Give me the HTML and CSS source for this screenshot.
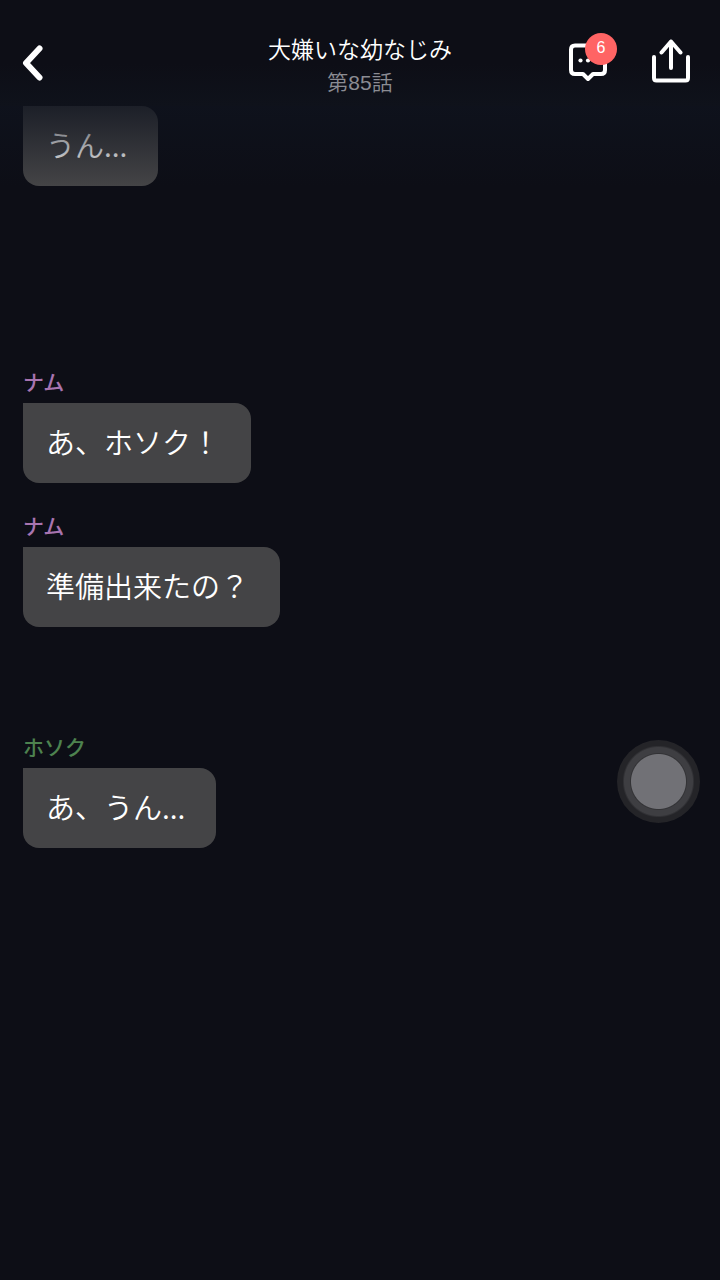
FILE: index.html
```html
<!DOCTYPE html>
<html lang="ja">
<head>
<meta charset="utf-8">
<meta name="viewport" content="width=device-width, initial-scale=1">
<title>大嫌いな幼なじみ 第85話</title>
<link rel="stylesheet" href="styles.css">
</head>
<body>
<header class="header">
  <div class="side">
    <button class="icon-button" type="button" aria-label="戻る">
      <svg width="22" height="36" viewBox="0 0 22 36"><path class="back-line" d="M17.500 3.500 4 18 17.500 32.500"/></svg>
    </button>
  </div>
  <div class="heading">
    <h1 class="title">大嫌いな幼なじみ</h1>
    <p class="episode">第85話</p>
  </div>
  <div class="side side-end">
    <button class="icon-button" type="button" aria-label="コメント">
      <svg width="40" height="44" viewBox="0 0 40 44"><path class="line" d="M7 6.500H33Q37 6.500 37 10.500V31Q37 35 33 35H25L20 40 15 35H7Q3 35 3 31V10.500Q3 6.500 7 6.500Z"/><g fill="#fff"><circle cx="12.500" cy="21.500" r="2.100"/><circle cx="20" cy="21.500" r="2.100"/></g></svg>
      <span class="badge">6</span>
    </button>
    <button class="icon-button" type="button" aria-label="共有">
      <svg width="40" height="44" viewBox="0 0 40 44"><path class="line" d="M3 18V39Q3 41.500 5.500 41.500H34.500Q37 41.500 37 39V18M20 29V2.500M10.500 13.500 20 2.500 29.500 13.500"/></svg>
    </button>
  </div>
</header>
<main class="chat">
  <article class="message"><p class="bubble">うん...</p></article>
  <article class="message after-long-pause">
    <h2 class="name name-namu">ナム</h2>
    <p class="bubble">あ、ホソク！</p>
  </article>
  <article class="message">
    <h2 class="name name-namu">ナム</h2>
    <p class="bubble">準備出来たの？</p>
  </article>
  <article class="message after-pause">
    <h2 class="name name-hosok">ホソク</h2>
    <p class="bubble">あ、うん...</p>
  </article>
</main>
<button class="touch" type="button" aria-label="AssistiveTouch"></button>
</body>
</html>
```
FILE: styles.css
```css
* {
  box-sizing: border-box;
}

body {
  margin: 0;
  min-height: 100vh;
  background: #0d0e16;
  color: #fff;
  font-family: "Noto Sans CJK JP", sans-serif;
}

h1, h2, p {
  margin: 0;
  font-weight: 350;
}

button {
  padding: 0;
  border: 0;
  background: none;
  color: inherit;
  font: inherit;
}

svg {
  display: block;
  fill: none;
}

.header {
  display: flex;
  align-items: center;
  height: 106px;
  padding: 20px 29px 0 22px;
  background: linear-gradient(#0d0e16 60%, #0f121b);
}

.side {
  display: flex;
  flex: 1;
}

.side-end {
  justify-content: flex-end;
  gap: 43px;
  padding-bottom: 4px;
}

.icon-button {
  position: relative;
}

.line {
  stroke: #fff;
  stroke-width: 4;
  stroke-linecap: round;
  stroke-linejoin: round;
}

.back-line {
  stroke: #fff;
  stroke-width: 6;
  stroke-linecap: round;
  stroke-linejoin: round;
}

.badge {
  position: absolute;
  top: -6px;
  right: -9px;
  width: 32px;
  height: 32px;
  border-radius: 50%;
  background: #ff6464;
  font-family: "Liberation Sans", sans-serif;
  font-size: 16px;
  line-height: 30px;
  text-align: center;
}

.heading {
  padding: 4px 0 0 7px;
  text-align: center;
}

.title {
  font-size: 23px;
  line-height: 36px;
}

.episode {
  color: #8b8c93;
  font-family: "Liberation Sans", "Noto Sans CJK JP", sans-serif;
  font-size: 21px;
  line-height: 34px;
}

.chat {
  position: relative;
  display: flex;
  flex-direction: column;
  align-items: flex-start;
  gap: 28px;
  padding: 0 23px 28px;
}

.chat::before {
  content: "";
  position: absolute;
  inset: 0 0 auto;
  height: 80px;
  background: linear-gradient(rgba(15, 19, 30, 0.75), rgba(15, 19, 30, 0));
  pointer-events: none;
  z-index: 1;
}

.bubble {
  width: fit-content;
  padding: 18px 31px 22px 23px;
  border-radius: 0 16px 16px 16px;
  background: #444446;
  font-size: 29px;
  line-height: 40px;
}

.name {
  padding-bottom: 8px;
  font-size: 21px;
  font-weight: 500;
  line-height: 28px;
}

.name-namu {
  color: #a874b0;
}

.name-hosok {
  color: #4d824f;
}

.after-long-pause {
  margin-top: 153px;
}

.after-pause {
  margin-top: 77px;
}

.touch {
  position: fixed;
  right: 20px;
  bottom: 457px;
  width: 83px;
  height: 83px;
  border-radius: 50%;
  background: radial-gradient(circle, #717176 0 27px, #323235 28px, #3e3e42 29px 34px, #242428 36px 100%);
}
```
